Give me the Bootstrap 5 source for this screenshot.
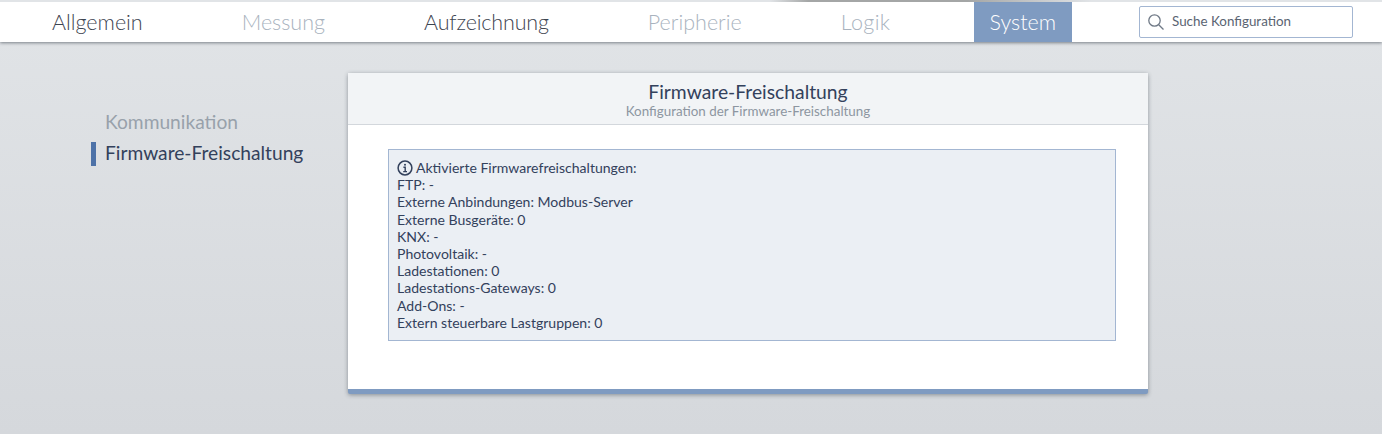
<!DOCTYPE html>
<html lang="de">
<head>
  <meta charset="UTF-8" />
  <meta name="viewport" content="width=device-width, initial-scale=1.0"/>
  <title>Firmware-Freischaltung</title>
  <link href="https://cdn.jsdelivr.net/npm/bootstrap@5.3.0/dist/css/bootstrap.min.css" rel="stylesheet">
  <style>
    html, body {
      height: 100%;
    }
    body {
      background: linear-gradient(180deg, #e1e4e7 0%, #d5d8dc 100%);
      font-family: Lato, "Noto Sans", sans-serif;
      color: #33415c;
      padding-top: 2px;
      overflow: hidden;
    }
    .top-strip {
      position: absolute;
      top: 0;
      left: 0;
      right: 0;
      height: 2px;
      background: linear-gradient(90deg, #e1e4e7 55.7%, #a4a6a6 58.5%, #a4a6a6 70%, #e1e4e7 79%);
    }
    .main-bar {
      height: 40px;
      background: #fff;
      box-shadow: 0 1px 3px rgba(40, 50, 60, .55);
      padding-left: 36px;
      padding-right: 29px;
    }
    .main-links {
      gap: 67px;
    }
    .main-link {
      height: 40px;
      line-height: 40px;
      padding: 0 16px;
      font-size: 21.5px;
      font-weight: 300;
      text-decoration: none;
      color: #3d4450;
    }
    .main-link.faded {
      color: #a9b3be;
    }
    .main-link.current {
      background: #7f9bc1;
      color: #fff;
    }
    .main-link.tight {
      letter-spacing: -.15px;
    }
    .main-link.wide {
      letter-spacing: .4px;
    }
    .search-box {
      width: 214px;
      height: 32px;
      border: 1px solid #a3b6d2;
      border-radius: 2px;
      padding-left: 7px;
      padding-bottom: 1px;
      gap: 7px;
      font-size: 13.4px;
      color: #5a6472;
    }
    .side-col {
      width: 348px;
      padding-top: 68px;
      padding-left: 91px;
    }
    .side-item {
      border-left: 5px solid transparent;
      padding-left: 9px;
      font-size: 19.2px;
      line-height: 24px;
      margin-bottom: 8px;
      color: #98a1ab;
    }
    .side-item.current {
      border-left-color: #4d72a8;
      line-height: 22px;
      padding-bottom: 2px;
      color: #33415c;
    }
    .config-panel {
      width: 800px;
      height: 321px;
      margin-top: 31px;
      background: #fff;
      border-bottom: 5px solid #7f9bc1;
      border-radius: 2px;
      box-shadow: 0 1px 4px rgba(40, 50, 60, .45);
    }
    .panel-head {
      height: 52px;
      background: #f2f4f6;
      border-bottom: 1px solid #d3d7dc;
      text-align: center;
      padding-top: 7px;
    }
    .panel-title {
      font-size: 19.3px;
      line-height: 23px;
    }
    .panel-sub {
      font-size: 13.4px;
      line-height: 16px;
      color: #8d96a1;
    }
    .info-box {
      margin: 24px 32px 0 40px;
      height: 192px;
      background: #ebeff4;
      border: 1px solid #a3b6d2;
      padding: 9px 8px;
      font-size: 14.05px;
      line-height: 17.2px;
      color: #33415c;
    }
    .info-head {
      gap: 3px;
    }
  </style>
</head>
<body>
  <div class="top-strip"></div>
  <nav class="main-bar d-flex align-items-center justify-content-between">
    <div class="d-flex main-links">
      <a class="main-link" href="#">Allgemein</a>
      <a class="main-link faded" href="#">Messung</a>
      <a class="main-link tight" href="#">Aufzeichnung</a>
      <a class="main-link faded" href="#">Peripherie</a>
      <a class="main-link faded wide" href="#">Logik</a>
      <a class="main-link current" href="#">System</a>
    </div>
    <div class="search-box d-flex align-items-center">
      <svg width="18" height="18" viewBox="0 0 18 18" fill="none" stroke="#6f7986" stroke-width="1.3">
        <circle cx="7.5" cy="7.5" r="5.7"/>
        <path d="M11.7 11.7 16.5 16.5"/>
      </svg>
      <span>Suche Konfiguration</span>
    </div>
  </nav>

  <div class="d-flex">
    <div class="side-col">
      <div class="side-item">Kommunikation</div>
      <div class="side-item current">Firmware-Freischaltung</div>
    </div>
    <div class="config-panel">
      <div class="panel-head">
        <div class="panel-title">Firmware-Freischaltung</div>
        <div class="panel-sub">Konfiguration der Firmware-Freischaltung</div>
      </div>
      <div class="info-box">
        <div class="info-head d-flex align-items-center">
          <svg width="16" height="16" viewBox="0 0 16 16" fill="none" stroke="#33415c" stroke-width="1.5">
            <circle cx="8" cy="8" r="6.9"/>
            <path d="M6.4 7.2H8.2V11.6M6.2 11.6H10" stroke-width="1.4"/>
            <circle cx="8" cy="4.7" r="1" fill="#33415c" stroke="none"/>
          </svg>
          <span>Aktivierte Firmwarefreischaltungen:</span>
        </div>
        <div>FTP: -</div>
        <div>Externe Anbindungen: Modbus-Server</div>
        <div>Externe Busgeräte: 0</div>
        <div>KNX: -</div>
        <div>Photovoltaik: -</div>
        <div>Ladestationen: 0</div>
        <div>Ladestations-Gateways: 0</div>
        <div>Add-Ons: -</div>
        <div>Extern steuerbare Lastgruppen: 0</div>
      </div>
    </div>
  </div>
  <script src="https://cdn.jsdelivr.net/npm/bootstrap@5.3.0/dist/js/bootstrap.bundle.min.js"></script>
</body>
</html>
